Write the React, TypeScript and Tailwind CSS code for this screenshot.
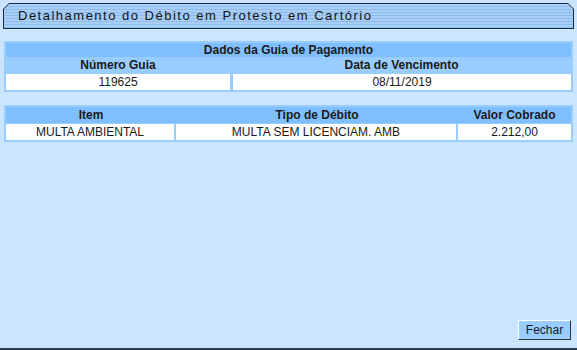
const font = "font-['Liberation_Sans',Arial,sans-serif]";

function Cell({ children, bold, white, w }: { children?: React.ReactNode; bold?: boolean; white?: boolean; w: string }) {
  return (
    <div
      className={`${w} h-[16px] flex items-center justify-center text-[12px] leading-none text-[#1a1a1a] ${
        bold ? "font-bold" : ""
      } ${white ? "bg-white" : ""}`}
    >
      {children}
    </div>
  );
}

export default function App() {
  return (
    <div className={`${font} w-[577px] h-[350px] bg-[#cce5ff] flex flex-col border-b-2 border-[#2d3b4f]`}>
      {/* Title tab */}
      <div className="mt-[3px] mx-[3px] h-[26px] bg-[#1c2b3d] p-px [clip-path:polygon(6px_0,calc(100%-6px)_0,100%_6px,100%_100%,0_100%,0_6px)]">
        <div className="h-full flex items-center pl-[14px] bg-[repeating-linear-gradient(to_bottom,#a9cef6_0px,#a9cef6_2px,#8fbcee_2px,#8fbcee_3px)] [clip-path:polygon(5px_0,calc(100%-5px)_0,100%_5px,100%_100%,0_100%,0_5px)]">
          <span className="text-[13px] tracking-[1.5px] text-[#141414]">
            Detalhamento do Débito em Protesto em Cartório
          </span>
        </div>
      </div>

      {/* Dados da Guia */}
      <div className="mt-[12px] mx-[4px] bg-[#99ccff] p-[2px] flex flex-col">
        <div className="h-[14px] bg-[#80bfff] flex items-center justify-center text-[12px] font-bold leading-none text-[#1a1a1a]">
          Dados da Guia de Pagamento
        </div>
        <div className="flex gap-[2px]">
          <Cell bold w="w-[224px]">Número Guia</Cell>
          <Cell bold w="flex-1">Data de Vencimento</Cell>
        </div>
        <div className="flex gap-[3px] mt-px">
          <Cell white w="w-[224px]">119625</Cell>
          <Cell white w="flex-1">08/11/2019</Cell>
        </div>
      </div>

      {/* Itens */}
      <div className="mt-[13px] mx-[4px] bg-[#99ccff] p-[2px] flex flex-col">
        <div className="flex bg-[#80bfff]">
          <Cell bold w="w-[170px]">Item</Cell>
          <Cell bold w="w-[282px]">Tipo de Débito</Cell>
          <Cell bold w="flex-1">Valor Cobrado</Cell>
        </div>
        <div className="flex gap-[2px] mt-px">
          <Cell white w="w-[168px]">MULTA AMBIENTAL</Cell>
          <Cell white w="w-[280px]">MULTA SEM LICENCIAM. AMB</Cell>
          <Cell white w="flex-1">2.212,00</Cell>
        </div>
      </div>

      <div className="flex-1" />

      <div className="flex justify-end pr-[6px] mb-[8px]">
        <button className="w-[53px] h-[20px] bg-[#99ccff] border border-t-white border-l-white border-r-[#333] border-b-[#333] text-[12px] leading-none text-[#1a1a1a]">
          Fechar
        </button>
      </div>
    </div>
  );
}
